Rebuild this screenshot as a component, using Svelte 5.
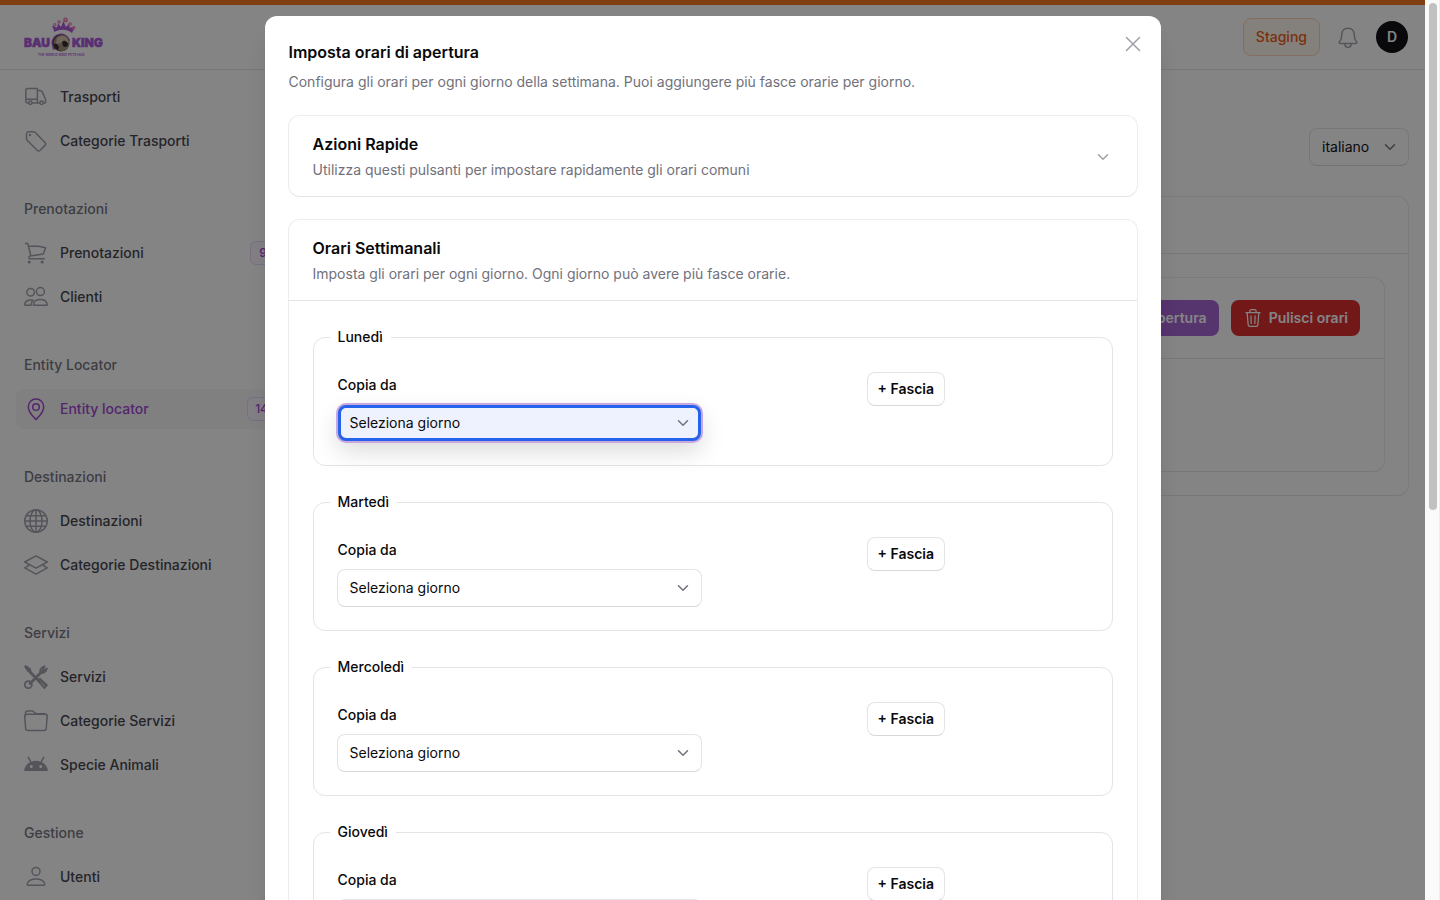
<script>
  const nav = [
    { title: '', items: [{ label: 'Trasporti', icon: 'truck' }, { label: 'Categorie Trasporti', icon: 'tag' }] },
    { title: 'Prenotazioni', items: [{ label: 'Prenotazioni', icon: 'cart', count: '9' }, { label: 'Clienti', icon: 'people' }] },
    { title: 'Entity Locator', items: [{ label: 'Entity locator', icon: 'pin', count: '14', active: true }] },
    { title: 'Destinazioni', items: [{ label: 'Destinazioni', icon: 'globe' }, { label: 'Categorie Destinazioni', icon: 'layers' }] },
    { title: 'Servizi', items: [{ label: 'Servizi', icon: 'tools' }, { label: 'Categorie Servizi', icon: 'folder' }, { label: 'Specie Animali', icon: 'android' }] },
    { title: 'Gestione', items: [{ label: 'Utenti', icon: 'user' }] }
  ];
  const days = ['Lunedì', 'Martedì', 'Mercoledì', 'Giovedì'];
</script>

{#snippet chevron()}
  <svg class="chevron" viewBox="0 0 20 20" aria-hidden="true"><path d="M5.5 7.8 10 12.2l4.5-4.4" /></svg>
{/snippet}

{#snippet icon(name)}
  <svg class="icon" viewBox="0 0 24 24" aria-hidden="true">
    {#if name === 'truck'}
      <path d="M4.5 18H3.2A1.4 1.4 0 0 1 1.8 16.600V5.400A1.8 1.8 0 0 1 3.600 3.600h9.800v14.400M8.200 18h7.600M13.400 5.500h2.700c1.200 0 1.900.8 2.400 1.900l2.100 4.800c.9 1.200 1 2 1 3.300v1.600a.9.900 0 0 1-.9.900h-1.200M1.800 14.200h11.600" />
      <circle cx="6.400" cy="17.800" r="1.700" /><circle cx="17.600" cy="17.800" r="1.700" />
    {:else if name === 'tag'}
      <path d="M2.500 4.500v5.300c0 .6.200 1 .6 1.400l10.100 10.100a2.100 2.100 0 0 0 2.900 0l4.900-4.900a2.100 2.100 0 0 0 0-2.900L11 3.300a2 2 0 0 0-1.400-.6H4.400a1.900 1.900 0 0 0-1.900 1.800Z" />
      <circle cx="5.900" cy="6.100" r=".5" />
    {:else if name === 'cart'}
      <path d="M1.500 2.600h2.300L6.900 15M4.300 5l10.200.3 7.100 1.500-2.300 6.200-13.100 2a1.600 1.600 0 0 0-.8 2.700h15" />
      <circle class="solid" cx="5.200" cy="21" r="1.600" /><circle class="solid" cx="18.100" cy="21" r="1.600" />
    {:else if name === 'people'}
      <circle cx="6.600" cy="7.200" r="3.800" /><circle cx="16.400" cy="6.600" r="4" />
      <path d="M10 20.300h12.500c.6 0 .8-.4.7-1-.6-3-3.500-4.800-6.900-4.800s-6.300 1.800-6.900 4.800c-.1.600.1 1 .6 1ZM7 20.300H1.300c-.5 0-.8-.3-.7-.8.500-2.700 3-4.500 6.300-4.500.8 0 1.500.1 2.200.3-1.200 1.300-2 3-2.100 5Z" />
    {:else if name === 'pin'}
      <path d="M12 22.700c-2.200-3.400-7.700-6.300-7.700-13C4.300 5.300 7.700 2 12 2s7.700 3.300 7.700 7.700c0 6.700-5.500 9.600-7.700 13Z" />
      <circle cx="12" cy="10" r="3.300" />
    {:else if name === 'globe'}
      <circle cx="12" cy="12" r="11.200" /><ellipse cx="12" cy="12" rx="6" ry="11.200" />
      <path d="M12 .8v22.400M.8 12h22.400M2.500 6.700h19M2.500 17.300h19" />
    {:else if name === 'layers'}
      <path d="m.7 9 11.300-6.200L23.300 9 12 15.200.7 9ZM4.500 12.600.7 14.900 12 21.200l11.300-6.300-3.800-2.300" />
    {:else if name === 'tools'}
      <path class="thick" d="m3 3 3 4 9.500 9.500" /><path class="thick" d="m6 18.500 12.500-12.500" />
      <path class="solid" d="m0 1.600 1.600-1.500 5.200 3.400.8 3L6.500 7.600l-3-.9L0 1.600Z" />
      <circle class="heavy" cx="4.300" cy="19.700" r="3.500" />
      <path class="heavy" d="M20.500 1.300a5 5 0 0 0-4 6.600M22.800 3.500a5 5 0 0 1-6.600 4.100M20.500 1.300l-1.600 3.100.7 1 3.200-1.900" />
      <path class="heavy" d="m13.900 15.700 2-2 7 6.500-2.500 2.900-6.500-7.400ZM17 16l4 4" />
    {:else if name === 'folder'}
      <path d="M1.500 6.700V4.500c0-1.800.8-2.500 2.300-2.500h4.500c2 0 2.400 2.800 4.400 2.800h7.800c1.500 0 2.200.7 2.200 2M3 5.200h18c1.500 0 2.300.9 2.200 2.300l-1 12c-.1 1.300-.8 1.900-2 1.900H3.700c-1.200 0-1.900-.6-2-1.900l-1-12C.6 6 1.500 5.200 3 5.200Z" />
    {:else if name === 'android'}
      <path d="m4.300 4.300 2.500 4.500m12.900-4.500-2.500 4.500" />
      <path class="solid" fill-rule="evenodd" d="M0 18C.6 12.200 5.400 7.700 12 7.700S23.400 12.200 24 18H0Zm7.300-6a1.500 1.500 0 1 0 0 3 1.500 1.500 0 0 0 0-3Zm9.400 0a1.500 1.500 0 1 0 0 3 1.500 1.500 0 0 0 0-3Z" />
    {:else if name === 'user'}
      <circle cx="12" cy="6.400" r="4" />
      <path d="M4.300 20.300h15.400c1.200 0 1.100-.9.900-1.700-.9-2.700-4.300-4.600-8.600-4.600s-7.700 1.900-8.600 4.600c-.2.800-.3 1.700.9 1.700Z" />
    {:else if name === 'bell'}
      <path d="M12 3.200c-4 0-6.300 2.900-6.300 6.700 0 4.200-.8 5.200-2.100 6.600-.7.800-.5 2.100 1 2.100h14.800c1.500 0 1.700-1.300 1-2.100-1.300-1.400-2.100-2.400-2.100-6.600 0-3.800-2.300-6.700-6.300-6.700ZM8.800 18.600c0 2.300 1.300 3.900 3.200 3.900s3.200-1.600 3.200-3.900" />
    {:else if name === 'trash'}
      <path d="M3.500 5.500h17M5 5.500l1.200 14.800c.1 1 .8 1.700 1.800 1.700h8c1 0 1.700-.7 1.800-1.700L19 5.500M8.300 5.300V3.600c0-1 .6-1.600 1.600-1.600h4.200c1 0 1.600.6 1.600 1.600v1.700M9.500 9.500l.3 9m4.700-9-.3 9" />
    {/if}
  </svg>
{/snippet}

<div class="viewport">
  <div class="app" inert>
    <header class="topbar">
      <svg class="logo" viewBox="0 0 80 40" role="img" aria-label="Bau King">
        <g fill="#a855d8">
          <path d="m30.500 15-2.500-6.500 5 2 1-4 3 3.500L39.500 4l2.300 6L45 7l.8 3.700 5.200-1.200L48 16c-5-4-12-4-17.500-1Z" />
          <path d="M27.500 26a9.500 9.500 0 0 1 18.500-3l-3 5-14 5Z" />
          <text class="wordmark" x="0" y="30">BAU</text>
          <text class="wordmark" x="48" y="30">KING</text>
          <text x="14" y="39" font-size="3.300" font-weight="600">THE WORLD WIDE PETS HUB</text>
        </g>
        <circle cx="37" cy="26" r="8.500" fill="#58443b" />
        <path d="M30 24c3-7 11-8 14-2 3 5 0 11-4 12-5 1-11-4-10-10Z" fill="#a38d78" />
        <path d="M33 21c3-3 8-3 11 1l1 4-5-3-3 3-5 1Z" fill="#d6c2a8" />
        <path d="M38 25c2-2 5-1 6 2 0 3-3 4-5 2ZM30 27c2-1 4 0 5 3l-1 3c-2-1-4-3-4-6Z" fill="#2b2424" />
        <g fill="#f478b1"><circle cx="41.500" cy="3" r="2.400" /><circle cx="35" cy="5" r="1.800" /><circle cx="30.700" cy="7.500" r="1.600" /><circle cx="46" cy="7" r="1.800" /><circle cx="49.500" cy="11" r="1.800" /></g>
        <g fill="#fff"><circle cx="41.500" cy="2.500" r=".7" /><circle cx="35" cy="5" r=".6" /><circle cx="30.700" cy="7.500" r=".5" /><circle cx="46" cy="7" r=".6" /></g>
      </svg>
      <div class="account">
        <span class="staging">Staging</span>
        <button class="bell" aria-label="Notifiche">{@render icon('bell')}</button>
        <button class="avatar">D</button>
      </div>
    </header>
    <div class="body">
      <nav class="sidebar" aria-label="Menu">
        {#each nav as group}
          <section class="group">
            {#if group.title}<h2>{group.title}</h2>{/if}
            {#each group.items as item}
              <a href="#menu" class:active={item.active}>
                {@render icon(item.icon)}
                <span class="name">{item.label}</span>
                {#if item.count}<span class="count">{item.count}</span>{/if}
              </a>
            {/each}
          </section>
        {/each}
      </nav>
      <main>
        <div class="language">
          <div class="select">
            <select aria-label="Lingua"><option>italiano</option></select>
            {@render chevron()}
          </div>
        </div>
        <section class="card">
          <div class="outer-head"></div>
          <div class="outer-body">
            <div class="card inner">
              <div class="inner-head">
                <button class="fill violet">Imposta orari di apertura</button>
                <button class="fill red">{@render icon('trash')}Pulisci orari</button>
              </div>
            </div>
          </div>
        </section>
      </main>
    </div>
  </div>

  <div class="overlay">
    <div class="dialog" role="dialog" aria-modal="true" aria-labelledby="dialog-title">
      <button class="close" aria-label="Chiudi"><svg viewBox="0 0 24 24" aria-hidden="true"><path d="m5.500 5.500 13 13M18.500 5.500l-13 13" /></svg></button>
      <header class="dialog-head">
        <h1 id="dialog-title">Imposta orari di apertura</h1>
        <p>Configura gli orari per ogni giorno della settimana. Puoi aggiungere più fasce orarie per giorno.</p>
      </header>
      <div class="cards">
        <section class="card">
          <header class="section-head">
            <div>
              <h2>Azioni Rapide</h2>
              <p>Utilizza questi pulsanti per impostare rapidamente gli orari comuni</p>
            </div>
            <button class="toggle" aria-label="Espandi">{@render chevron()}</button>
          </header>
        </section>
        <section class="card">
          <header class="section-head">
            <div>
              <h2>Orari Settimanali</h2>
              <p>Imposta gli orari per ogni giorno. Ogni giorno può avere più fasce orarie.</p>
            </div>
          </header>
          <div class="days">
            {#each days as day, i}
              <fieldset>
                <legend>{day}</legend>
                <div class="day">
                  <div class="copy">
                    <label for={'copy-' + i}>Copia da</label>
                    <div class="select" class:focused={i === 0}>
                      <select id={'copy-' + i}><option>Seleziona giorno</option></select>
                      {@render chevron()}
                    </div>
                  </div>
                  <div class="add"><button>+ Fascia</button></div>
                </div>
              </fieldset>
            {/each}
          </div>
        </section>
      </div>
    </div>
  </div>
  <div class="scroll-track"><div class="scroll-thumb"></div></div>
</div>

<style>
  :global(body) { margin: 0; }
  .viewport, .viewport * { box-sizing: border-box; }
  .viewport {
    position: relative;
    height: 100vh;
    overflow: hidden;
    display: grid;
    grid-template-columns: minmax(0, 1fr) 15px;
    font: 14px/24px Inter, sans-serif;
    color: #09090b;
    background: #fff;
  }
  h1, h2, p { margin: 0; }
  button, select { font: inherit; color: inherit; }
  button { cursor: pointer; }
  svg { display: block; flex: none; }
  .icon { width: 24px; height: 24px; fill: none; stroke: #9f9fa9; stroke-width: 1.500; stroke-linecap: round; stroke-linejoin: round; }
  .icon .solid { fill: #9f9fa9; stroke: none; }
  .icon .thick { stroke-width: 2.800; }
  .icon .heavy { stroke-width: 1.800; }

  .app { overflow: hidden; border-top: 5px solid #f97316; background: #fff; }
  .topbar {
    display: flex;
    align-items: center;
    justify-content: space-between;
    height: 65px;
    padding: 0 17px 0 24px;
    border-bottom: 1px solid #e4e4e7;
  }
  .logo { width: 80px; height: 40px; font-family: Inter, sans-serif; }
  .wordmark { font-size: 12px; font-weight: 900; stroke: #a855d8; stroke-width: .5; }
  .account { display: flex; align-items: center; gap: 16px; }
  .staging { padding: 6px 12px; border: 1px solid #fed0b5; border-radius: 8px; background: #fff7ed; color: #ea580c; font-weight: 500; }
  .bell { padding: 0; border: 0; background: none; }
  .avatar { width: 32px; height: 32px; padding: 0; border: 0; border-radius: 50%; background: #09090b; color: #fff; font-weight: 600; }
  .body { display: flex; }
  .sidebar { flex: none; width: 300px; padding: 7px 16px 0; }
  .group { margin-bottom: 28px; }
  .group h2 { margin-bottom: 4px; padding: 8px; color: #71717b; font: inherit; font-weight: 500; }
  .sidebar a {
    display: flex;
    align-items: center;
    gap: 12px;
    height: 40px;
    margin-bottom: 4px;
    padding: 0 8px;
    border-radius: 8px;
    color: #3f3f46;
    font-weight: 500;
    text-decoration: none;
  }
  .name { flex: 1; }
  .count { min-width: 26px; padding: 0 7px; border: 1px solid #e9d5f8; border-radius: 6px; background: #faf5ff; color: #a040d0; font-size: 12px; line-height: 22px; text-align: center; }
  .sidebar a.active { background: #f6f6f7; color: #a040d0; }
  .active .icon { stroke: #a040d0; }

  main { flex: 1; padding: 58px 16px 0 32px; }
  .language { width: 98px; margin: 0 1px 30px auto; }
  .card { border: 1px solid #ececee; border-bottom-color: #e4e4e7; border-radius: 12px; background: #fff; }
  .outer-head { height: 57px; border-bottom: 1px solid #e4e4e7; }
  .outer-body { padding: 23px; }
  .inner { min-height: 195px; }
  .inner-head { display: flex; justify-content: flex-end; gap: 12px; padding: 22px 24px; border-bottom: 1px solid #e4e4e7; }
  .fill { display: flex; align-items: center; gap: 6px; height: 36px; padding: 0 12px; border: 0; border-radius: 8px; color: #fff; font-weight: 600; }
  .violet { background: #a35ed1; }
  .red { background: #dd2727; }
  .red .icon { width: 20px; height: 20px; stroke: #fff; }

  .overlay {
    position: absolute;
    inset: 0 15px 0 0;
    display: flex;
    align-items: flex-start;
    justify-content: center;
    padding: 16px;
    overflow: hidden;
    background: rgb(9 9 11 / 50%);
  }
  .dialog {
    position: relative;
    width: 100%;
    max-width: 896px;
    padding: 24px 24px 0;
    border-radius: 12px;
    background: #fff;
    box-shadow: 0 20px 25px -5px rgb(0 0 0 / 10%), 0 8px 10px -6px rgb(0 0 0 / 10%);
  }
  .close { position: absolute; top: 16px; right: 16px; padding: 0; border: 0; background: none; }
  .close svg { width: 24px; height: 24px; fill: none; stroke: #9f9fa9; stroke-width: 1.500; stroke-linecap: round; }
  .dialog-head { padding-bottom: 21px; }
  h1, .section-head h2 { font-size: 16px; font-weight: 600; line-height: 24px; }
  .dialog-head p { margin-top: 6px; }
  .dialog-head p, .section-head p { color: #71717b; }
  .cards { display: grid; gap: 22px; margin: 0 -1px; }
  .section-head { display: flex; align-items: center; justify-content: space-between; padding: 16px 24px 14px; }
  .section-head p { margin-top: 2px; }
  .toggle { padding: 0; border: 0; background: none; }
  .chevron { width: 20px; height: 20px; fill: none; stroke: #71717b; stroke-width: 1.500; stroke-linecap: round; stroke-linejoin: round; }
  .toggle .chevron { stroke: #9f9fa9; }
  .days { display: grid; gap: 24px; padding: 24px; border-top: 1px solid #e4e4e7; }
  fieldset { min-width: 0; margin: 0; padding: 23px 24px; border: 1px solid #e4e4e7; border-radius: 12px; }
  legend { margin-left: -8px; padding: 0 8px; font-weight: 500; }
  .day { display: grid; grid-template-columns: 363px minmax(0, 1fr); }
  .copy label { display: block; margin-bottom: 6px; font-weight: 500; line-height: 26px; }
  .select { position: relative; height: 38px; margin: 0 -1px; }
  .select select {
    display: block;
    width: 100%;
    height: 100%;
    padding: 0 36px 0 12px;
    appearance: none;
    border: 1px solid #e4e4e7;
    border-bottom-color: #d8d8dc;
    border-radius: 8px;
    background: #fff;
    color: #09090b;
    outline: none;
  }
  .select .chevron { position: absolute; top: 9px; right: 9px; pointer-events: none; }
  .focused { padding: 1px; }
  .focused select {
    border: 3px solid #2563eb;
    padding-left: 9px;
    background: #eef2ff;
    box-shadow: 0 0 0 2px #c9a8e0, 0 10px 24px rgb(0 0 0 / 15%);
  }
  .add { padding-left: 166px; }
  .add button { height: 34px; padding: 0 10px; border: 1px solid #e4e4e7; border-bottom-color: #d8d8dc; border-radius: 8px; background: #fff; font-weight: 600; }
  .scroll-track { display: grid; grid-template-rows: 507fr 390fr; padding: 3px 2px 0 4px; background: #fafafa; border-right: 1px solid #ededed; }
  .scroll-thumb { border-radius: 4px; background: #c1c1c1; }
</style>
